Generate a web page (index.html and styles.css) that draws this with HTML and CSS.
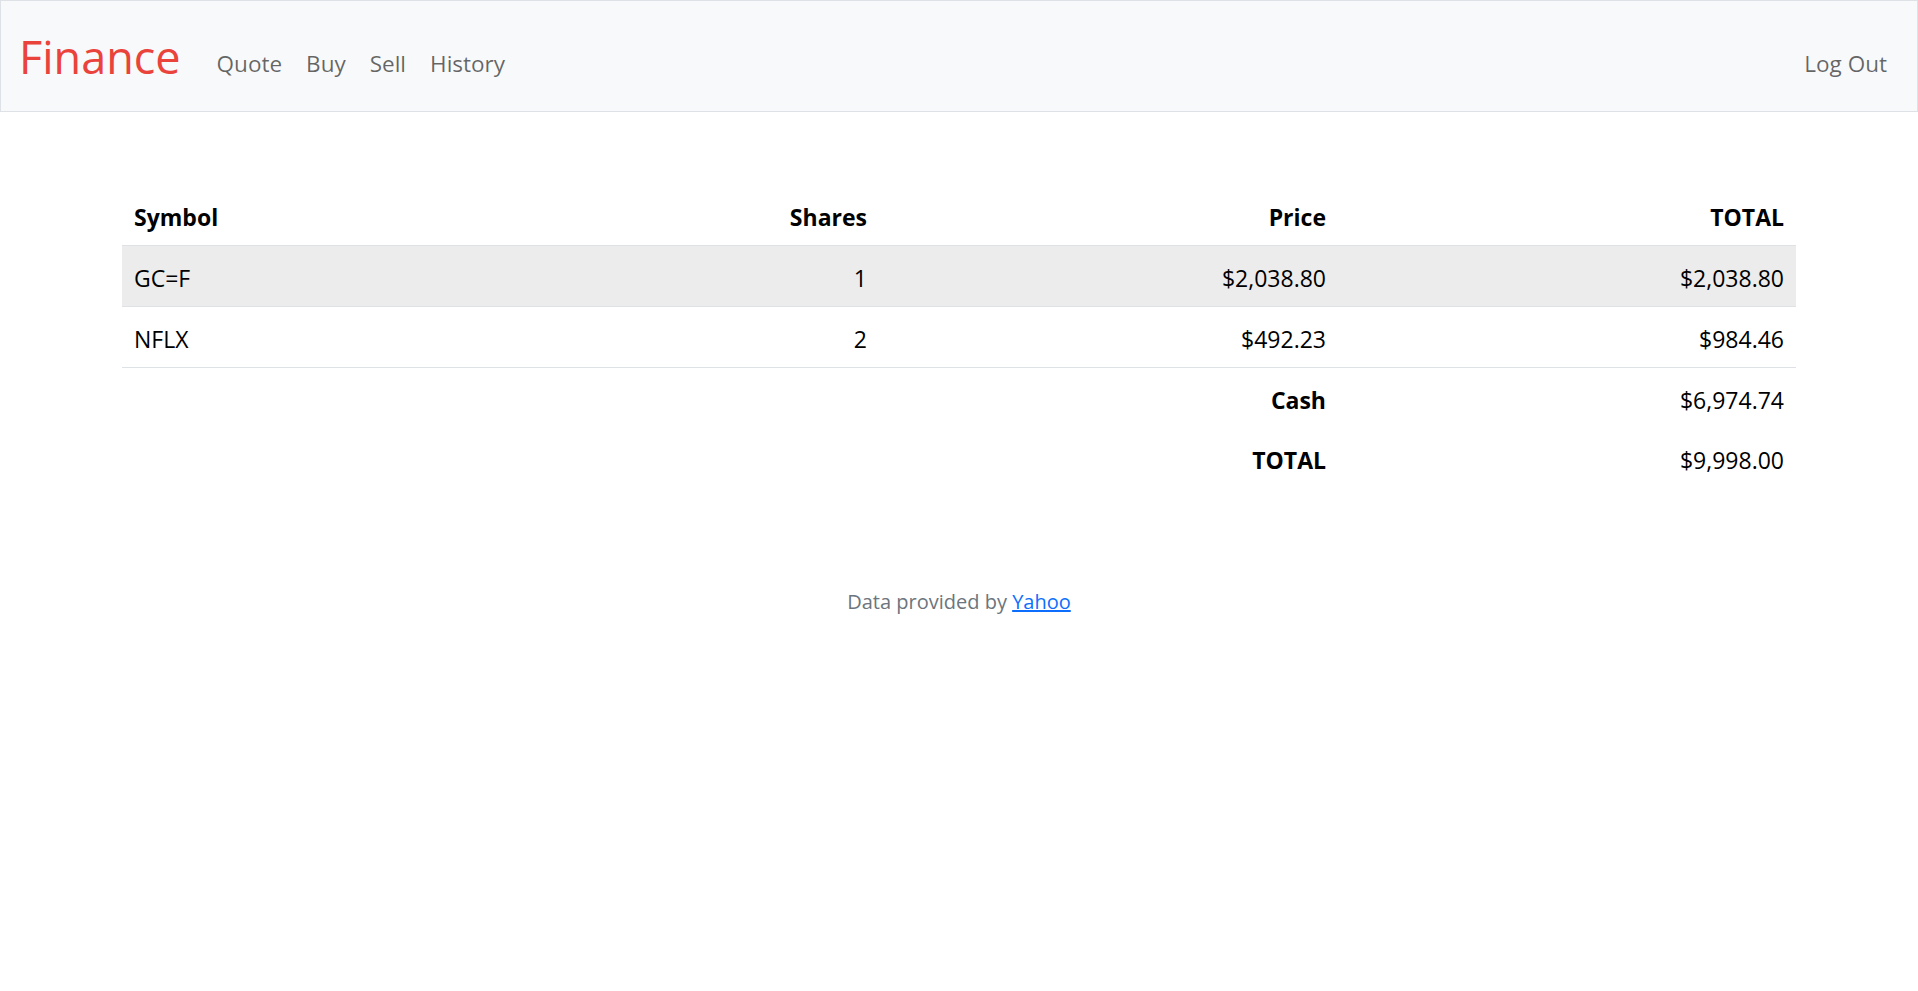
FILE: index.html
```html
<!DOCTYPE html>
<html lang="en">
<head>
<meta charset="utf-8">
<title>C$50 Finance: Portfolio</title>
<link rel="stylesheet" href="styles.css">
</head>
<body>
<nav class="navbar">
  <div class="navbar-inner">
    <a class="brand" href="#">Finance</a>
    <ul class="nav-list">
      <li><a class="nav-link" href="#">Quote</a></li>
      <li><a class="nav-link" href="#">Buy</a></li>
      <li><a class="nav-link" href="#">Sell</a></li>
      <li><a class="nav-link" href="#">History</a></li>
    </ul>
    <ul class="nav-list nav-right">
      <li><a class="nav-link" href="#">Log Out</a></li>
    </ul>
  </div>
</nav>
<main class="container">
  <table class="portfolio">
    <colgroup>
      <col class="col-symbol">
      <col class="col-shares">
      <col class="col-price">
      <col class="col-total">
    </colgroup>
    <thead>
      <tr>
        <th class="text-start">Symbol</th>
        <th class="text-end">Shares</th>
        <th class="text-end">Price</th>
        <th class="text-end">TOTAL</th>
      </tr>
    </thead>
    <tbody>
      <tr class="striped">
        <td class="text-start">GC=F</td>
        <td class="text-end">1</td>
        <td class="text-end">$2,038.80</td>
        <td class="text-end">$2,038.80</td>
      </tr>
      <tr>
        <td class="text-start">NFLX</td>
        <td class="text-end">2</td>
        <td class="text-end">$492.23</td>
        <td class="text-end">$984.46</td>
      </tr>
    </tbody>
    <tfoot>
      <tr>
        <td class="foot-label text-end" colspan="3">Cash</td>
        <td class="foot-value text-end">$6,974.74</td>
      </tr>
      <tr>
        <td class="foot-label text-end" colspan="3">TOTAL</td>
        <td class="foot-value text-end">$9,998.00</td>
      </tr>
    </tfoot>
  </table>
</main>
<footer class="footer">Data provided by <a href="#">Yahoo</a></footer>
</body>
</html>
```
FILE: styles.css
```css
html, body {
  margin: 0;
  padding: 0;
}

body {
  font-family: "Open Sans", "Noto Sans", sans-serif;
  font-size: 24px;
  line-height: 1.5;
  color: #212529;
  background: #fff;
}

.navbar {
  background: #f8f9fa;
  border: 1px solid #dee2e6;
  padding: 12px 0 11px;
}

.navbar-inner {
  display: flex;
  align-items: center;
  padding: 0 18px;
}

.brand {
  font-size: 45px;
  line-height: 72px;
  padding: 7.5px 0;
  margin-right: 24px;
  color: #ea433b;
  text-decoration: none;
}

.nav-list {
  list-style: none;
  margin: 0;
  padding: 0;
  display: flex;
}

.nav-right {
  margin-left: auto;
}

.nav-link {
  display: block;
  padding: 19px 12px 5px;
  font-size: 22.5px;
  line-height: 36px;
  color: rgba(0, 0, 0, 0.6);
  text-decoration: none;
}

.container {
  max-width: 1710px;
  margin: 0 auto;
  padding: 73px 18px 72px;
  box-sizing: border-box;
}

.portfolio {
  width: 100%;
  border-collapse: collapse;
  table-layout: fixed;
  margin-bottom: 24px;
  color: #000;
}

.col-symbol { width: 298px; }
.col-shares { width: 459px; }
.col-price { width: 459px; }
.col-total { width: 458px; }

.portfolio th,
.portfolio td {
  padding: 14px 12px 10px;
  line-height: 36px;
  font-size: 23px;
  border-bottom: 1px solid #dee2e6;
}

.portfolio th {
  font-weight: 700;
}

.portfolio .striped td {
  background: #ececec;
}

.portfolio tfoot td {
  border-bottom: 0;
}

.foot-label {
  font-weight: 700;
}

.text-start { text-align: left; }
.text-end { text-align: right; }

.footer {
  text-align: center;
  font-size: 20px;
  line-height: 31.5px;
  padding-top: 2px;
  color: #6c757d;
  margin-bottom: 48px;
}

.footer a {
  color: #0d6efd;
  text-decoration: underline;
}
```
